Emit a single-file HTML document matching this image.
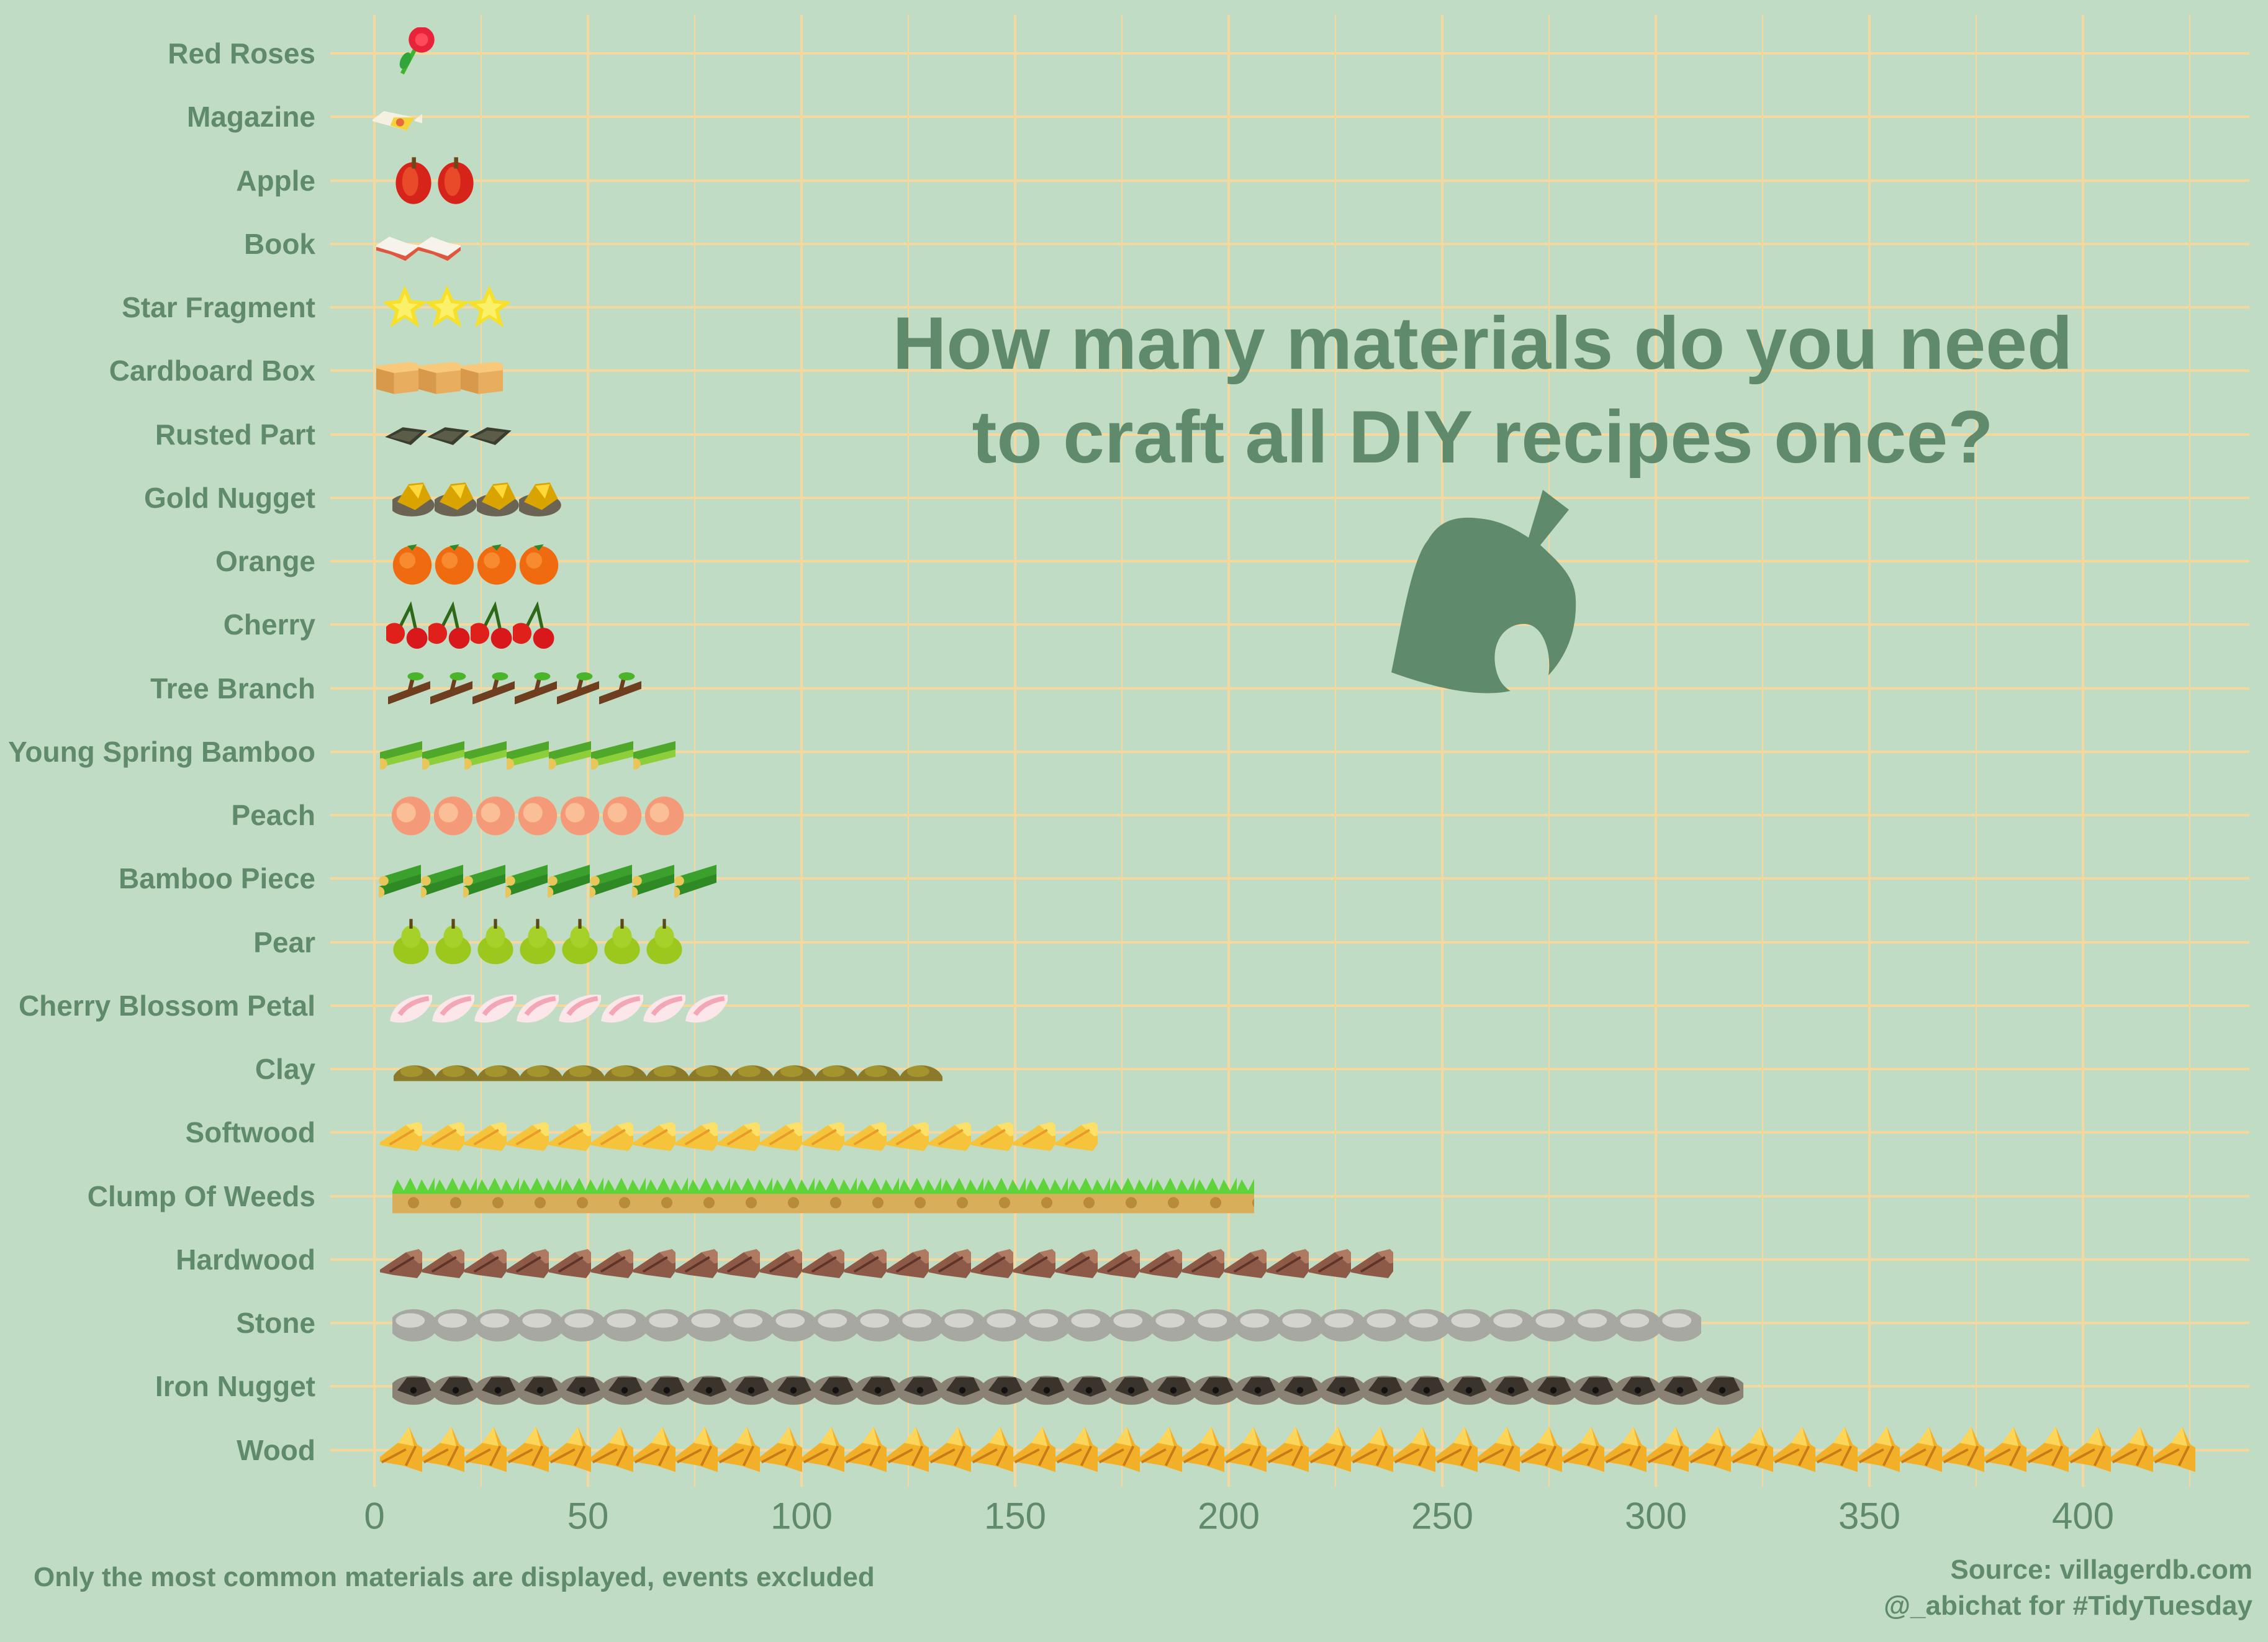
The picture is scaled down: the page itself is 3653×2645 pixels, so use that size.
<!DOCTYPE html>
<html><head><meta charset="utf-8"><style>
html,body{margin:0;padding:0;background:#c1dcc4;}
svg{display:block}
text{font-family:"Liberation Sans",sans-serif;fill:#5f8a6b}
</style></head><body>
<svg width="3653" height="2645" viewBox="0 0 3653 2645" xmlns="http://www.w3.org/2000/svg">
<defs>
<pattern id="rose" width="68" height="84" patternUnits="userSpaceOnUse"><g transform="translate(34,42) scale(1.3) translate(-34,-35)"><path d="M40,22 L20,60" stroke="#3fb52c" stroke-width="5"/><ellipse cx="24" cy="44" rx="6" ry="11" fill="#2fa53a" transform="rotate(25 24 44)"/><circle cx="44" cy="18" r="16" fill="#e8243a"/><circle cx="44" cy="18" r="8" fill="#ff4a5a"/></g></pattern>
<pattern id="mag" width="68" height="84" patternUnits="userSpaceOnUse"><g transform="translate(34,42) scale(1.3) translate(-34,-35)"><polygon points="6,40 22,28 60,36 50,52" fill="#f4f1e0"/><polygon points="34,36 60,36 50,52 30,46" fill="#f5d33a"/><circle cx="42" cy="42" r="5" fill="#e86a3a"/></g></pattern>
<pattern id="apple" width="68" height="84" patternUnits="userSpaceOnUse"><g transform="translate(34,42) scale(1.3) translate(-34,-35)"><ellipse cx="34" cy="38" rx="22" ry="26" fill="#d6241a"/><ellipse cx="30" cy="36" rx="10" ry="18" fill="#e84a2a"/><rect x="32" y="6" width="5" height="14" fill="#6a4a1a"/></g></pattern>
<pattern id="book" width="68" height="84" patternUnits="userSpaceOnUse"><g transform="translate(34,42) scale(1.3) translate(-34,-35)"><polygon points="4,42 24,28 48,36 64,40 44,56 26,48" fill="#e0573f"/><polygon points="6,38 24,26 46,34 62,37 44,50 26,44" fill="#f7f3ea"/></g></pattern>
<pattern id="star" width="68" height="84" patternUnits="userSpaceOnUse"><g transform="translate(34,42) scale(1.3) translate(-34,-35)"><polygon points="34,8 42,26 62,28 46,40 52,60 34,48 16,60 22,40 6,28 26,26" fill="#f7e02a"/><polygon points="34,18 39,30 50,31 41,38 44,50 34,44 24,50 27,38 18,31 29,30" fill="#fbf06a"/></g></pattern>
<pattern id="box" width="68" height="84" patternUnits="userSpaceOnUse"><g transform="translate(34,42) scale(1.3) translate(-34,-35)"><polygon points="0,30 50,24 80,32 30,38" fill="#f8c97a"/><polygon points="0,30 30,38 30,64 0,56" fill="#d89a4a"/><polygon points="30,38 80,32 80,58 30,64" fill="#e8ad5e"/></g></pattern>
<pattern id="rust" width="68" height="84" patternUnits="userSpaceOnUse"><g transform="translate(34,42) scale(1.3) translate(-34,-35)"><polygon points="8,38 30,26 60,30 40,48" fill="#3b3d30"/><polygon points="14,38 30,30 52,32 38,44" fill="#5b5d48"/></g></pattern>
<pattern id="gold" width="68" height="84" patternUnits="userSpaceOnUse"><g transform="translate(34,42) scale(1.3) translate(-34,-35)"><ellipse cx="32" cy="44" rx="28" ry="14" fill="#6b6454"/><polygon points="14,40 28,18 46,16 56,36 36,50" fill="#d9a400"/><polygon points="28,20 46,18 40,36" fill="#ffd83a"/></g></pattern>
<pattern id="orange" width="68" height="84" patternUnits="userSpaceOnUse"><g transform="translate(34,42) scale(1.3) translate(-34,-35)"><circle cx="34" cy="40" r="24" fill="#f06a10"/><circle cx="28" cy="34" r="10" fill="#f88a30"/><path d="M28,16 L40,14 L34,22Z" fill="#2c8a2a"/></g></pattern>
<pattern id="cherry" width="68" height="84" patternUnits="userSpaceOnUse"><g transform="translate(34,42) scale(1.3) translate(-34,-35)"><path d="M22,44 L38,12 L46,48" stroke="#2c6a1a" stroke-width="4" fill="none"/><circle cx="18" cy="46" r="13" fill="#e0201a"/><circle cx="46" cy="52" r="13" fill="#d8181a"/></g></pattern>
<pattern id="branch" width="68" height="84" patternUnits="userSpaceOnUse"><g transform="translate(34,42) scale(1.3) translate(-34,-35)"><path d="M8,50 L62,30" stroke="#6e3e1e" stroke-width="9" stroke-linecap="round"/><path d="M34,40 L38,24" stroke="#6e3e1e" stroke-width="5"/><ellipse cx="42" cy="20" rx="10" ry="5" fill="#4ab52a"/></g></pattern>
<pattern id="ybamboo" width="68" height="84" patternUnits="userSpaceOnUse"><g transform="translate(34,42) scale(1.3) translate(-34,-35)"><path d="M4,48 L60,34" stroke="#8ccf3a" stroke-width="14" stroke-linecap="round"/><path d="M10,40 L64,26" stroke="#4fa82a" stroke-width="10" stroke-linecap="round"/><circle cx="10" cy="50" r="7" fill="#e8c65a"/></g></pattern>
<pattern id="peach" width="68" height="84" patternUnits="userSpaceOnUse"><g transform="translate(34,42) scale(1.3) translate(-34,-35)"><circle cx="34" cy="36" r="24" fill="#f59a78"/><circle cx="28" cy="32" r="12" fill="#fbbf98"/></g></pattern>
<pattern id="bamboo" width="68" height="84" patternUnits="userSpaceOnUse"><g transform="translate(34,42) scale(1.3) translate(-34,-35)"><path d="M6,52 L60,34" stroke="#2f8a26" stroke-width="12" stroke-linecap="round"/><path d="M14,38 L66,22" stroke="#3ca02c" stroke-width="11" stroke-linecap="round"/><circle cx="8" cy="52" r="7" fill="#e8c65a"/><circle cx="14" cy="38" r="6" fill="#e8c65a"/></g></pattern>
<pattern id="pear" width="68" height="84" patternUnits="userSpaceOnUse"><g transform="translate(34,42) scale(1.3) translate(-34,-35)"><ellipse cx="34" cy="44" rx="22" ry="18" fill="#9cc81e"/><ellipse cx="34" cy="28" rx="12" ry="14" fill="#a6d02a"/><rect x="32" y="6" width="4" height="12" fill="#5a4a1a"/></g></pattern>
<pattern id="petal" width="68" height="84" patternUnits="userSpaceOnUse"><g transform="translate(34,42) scale(1.3) translate(-34,-35)"><path d="M8,54 C10,30 40,18 62,22 C58,44 34,62 8,54Z" fill="#fbe6ea"/><path d="M20,46 C28,34 42,28 56,26" stroke="#f2a6b6" stroke-width="6" fill="none"/></g></pattern>
<pattern id="clay" width="68" height="84" patternUnits="userSpaceOnUse"><g transform="translate(34,42) scale(1.3) translate(-34,-35)"><path d="M6,50 C8,26 56,22 62,50Z" fill="#8a7a2a"/><ellipse cx="30" cy="38" rx="14" ry="7" fill="#a4942e"/></g></pattern>
<pattern id="soft" width="68" height="84" patternUnits="userSpaceOnUse"><g transform="translate(34,42) scale(1.3) translate(-34,-35)"><polygon points="4,50 40,26 56,22 70,36 54,58 24,54" fill="#f5c43a"/><polygon points="40,26 56,22 70,36 56,40" fill="#fbe06a"/><path d="M20,50 L50,32" stroke="#e89a2a" stroke-width="3"/></g></pattern>
<pattern id="weeds" width="68" height="84" patternUnits="userSpaceOnUse"><g transform="translate(34,42) scale(1.3) translate(-34,-35)"><rect x="-20" y="30" width="108" height="26" fill="#d8ae5a"/><circle cx="34" cy="43" r="7" fill="#b88a3a"/><path d="M-20,28 L-12,14 L-6,28 L0,12 L8,28 L14,14 L22,28 L30,12 L38,28 L44,14 L52,28 L60,12 L68,28 L76,14 L88,28 L88,32 L-20,32Z" fill="#5fd43a"/></g></pattern>
<pattern id="hard" width="68" height="84" patternUnits="userSpaceOnUse"><g transform="translate(34,42) scale(1.3) translate(-34,-35)"><polygon points="4,50 40,26 56,22 70,36 54,58 24,54" fill="#8e5a48"/><polygon points="40,26 56,22 70,36 56,40" fill="#b07a62"/><path d="M20,50 L50,32" stroke="#5e3428" stroke-width="3"/></g></pattern>
<pattern id="stone" width="68" height="84" patternUnits="userSpaceOnUse"><g transform="translate(34,42) scale(1.3) translate(-34,-35)"><ellipse cx="34" cy="38" rx="30" ry="20" fill="#a8a8a2"/><ellipse cx="30" cy="32" rx="18" ry="9" fill="#d4d4ce"/></g></pattern>
<pattern id="iron" width="68" height="84" patternUnits="userSpaceOnUse"><g transform="translate(34,42) scale(1.3) translate(-34,-35)"><ellipse cx="34" cy="40" rx="30" ry="18" fill="#8a8274"/><polygon points="14,40 26,24 48,24 56,40 36,48" fill="#3a342c"/><circle cx="34" cy="40" r="4" fill="#111"/></g></pattern>
<pattern id="wood" width="68" height="84" patternUnits="userSpaceOnUse"><g transform="translate(34,42) scale(1.3) translate(-34,-35)"><polygon points="2,48 30,26 44,6 54,28 70,38 60,62 36,54" fill="#f2b028"/><polygon points="30,26 44,6 50,30" fill="#fcd65a"/><path d="M10,50 L40,34 M40,54 L52,30" stroke="#c87a1a" stroke-width="3"/></g></pattern>
</defs>

<g stroke="#f6d89c" stroke-width="2">
<line x1="775" y1="24" x2="775" y2="2395"/><line x1="1119" y1="24" x2="1119" y2="2395"/><line x1="1463" y1="24" x2="1463" y2="2395"/><line x1="1807" y1="24" x2="1807" y2="2395"/><line x1="2151" y1="24" x2="2151" y2="2395"/><line x1="2495" y1="24" x2="2495" y2="2395"/><line x1="2839" y1="24" x2="2839" y2="2395"/><line x1="3183" y1="24" x2="3183" y2="2395"/><line x1="3527" y1="24" x2="3527" y2="2395"/>
</g>
<g stroke="#f6d89c" stroke-width="4">
<line x1="603" y1="24" x2="603" y2="2395"/><line x1="947" y1="24" x2="947" y2="2395"/><line x1="1291" y1="24" x2="1291" y2="2395"/><line x1="1635" y1="24" x2="1635" y2="2395"/><line x1="1979" y1="24" x2="1979" y2="2395"/><line x1="2323" y1="24" x2="2323" y2="2395"/><line x1="2667" y1="24" x2="2667" y2="2395"/><line x1="3011" y1="24" x2="3011" y2="2395"/><line x1="3355" y1="24" x2="3355" y2="2395"/>
</g>
<g stroke="#f6d89c" stroke-width="4">
<line x1="532" x2="3623" y1="86" y2="86"/><line x1="532" x2="3623" y1="188" y2="188"/><line x1="532" x2="3623" y1="291" y2="291"/><line x1="532" x2="3623" y1="393" y2="393"/><line x1="532" x2="3623" y1="495" y2="495"/><line x1="532" x2="3623" y1="597" y2="597"/><line x1="532" x2="3623" y1="700" y2="700"/><line x1="532" x2="3623" y1="802" y2="802"/><line x1="532" x2="3623" y1="904" y2="904"/><line x1="532" x2="3623" y1="1006" y2="1006"/><line x1="532" x2="3623" y1="1109" y2="1109"/><line x1="532" x2="3623" y1="1211" y2="1211"/><line x1="532" x2="3623" y1="1313" y2="1313"/><line x1="532" x2="3623" y1="1415" y2="1415"/><line x1="532" x2="3623" y1="1518" y2="1518"/><line x1="532" x2="3623" y1="1620" y2="1620"/><line x1="532" x2="3623" y1="1722" y2="1722"/><line x1="532" x2="3623" y1="1824" y2="1824"/><line x1="532" x2="3623" y1="1927" y2="1927"/><line x1="532" x2="3623" y1="2029" y2="2029"/><line x1="532" x2="3623" y1="2131" y2="2131"/><line x1="532" x2="3623" y1="2233" y2="2233"/><line x1="532" x2="3623" y1="2336" y2="2336"/>
</g>

<rect width="68" height="84" fill="url(#rose)" transform="translate(632,44)"/>
<rect width="80" height="84" fill="url(#mag)" transform="translate(600,146)"/>
<rect width="136" height="84" fill="url(#apple)" transform="translate(632,249)"/>
<rect width="136" height="84" fill="url(#book)" transform="translate(606,351)"/>
<rect width="204" height="84" fill="url(#star)" transform="translate(618,453)"/>
<rect width="204" height="84" fill="url(#box)" transform="translate(606,555)"/>
<rect width="204" height="84" fill="url(#rust)" transform="translate(620,658)"/>
<rect width="272" height="84" fill="url(#gold)" transform="translate(632,760)"/>
<rect width="272" height="84" fill="url(#orange)" transform="translate(630,862)"/>
<rect width="272" height="84" fill="url(#cherry)" transform="translate(622,964)"/>
<rect width="408" height="84" fill="url(#branch)" transform="translate(625,1067)"/>
<rect width="476" height="84" fill="url(#ybamboo)" transform="translate(612,1169)"/>
<rect width="476" height="84" fill="url(#peach)" transform="translate(628,1271)"/>
<rect width="544" height="84" fill="url(#bamboo)" transform="translate(610,1373)"/>
<rect width="476" height="84" fill="url(#pear)" transform="translate(628,1476)"/>
<rect width="544" height="84" fill="url(#petal)" transform="translate(628,1578)"/>
<rect width="884" height="84" fill="url(#clay)" transform="translate(634,1680)"/>
<rect width="1156" height="84" fill="url(#soft)" transform="translate(612,1782)"/>
<rect width="1388" height="84" fill="url(#weeds)" transform="translate(632,1885)"/>
<rect width="1632" height="84" fill="url(#hard)" transform="translate(612,1987)"/>
<rect width="2108" height="84" fill="url(#stone)" transform="translate(632,2089)"/>
<rect width="2176" height="84" fill="url(#iron)" transform="translate(632,2191)"/>
<rect width="2924" height="84" fill="url(#wood)" transform="translate(612,2294)"/>

<g font-size="46" font-weight="bold" text-anchor="end" dominant-baseline="central">
<text x="508" y="86">Red Roses</text><text x="508" y="188">Magazine</text><text x="508" y="291">Apple</text><text x="508" y="393">Book</text><text x="508" y="495">Star Fragment</text><text x="508" y="597">Cardboard Box</text><text x="508" y="700">Rusted Part</text><text x="508" y="802">Gold Nugget</text><text x="508" y="904">Orange</text><text x="508" y="1006">Cherry</text><text x="508" y="1109">Tree Branch</text><text x="508" y="1211">Young Spring Bamboo</text><text x="508" y="1313">Peach</text><text x="508" y="1415">Bamboo Piece</text><text x="508" y="1518">Pear</text><text x="508" y="1620">Cherry Blossom Petal</text><text x="508" y="1722">Clay</text><text x="508" y="1824">Softwood</text><text x="508" y="1927">Clump Of Weeds</text><text x="508" y="2029">Hardwood</text><text x="508" y="2131">Stone</text><text x="508" y="2233">Iron Nugget</text><text x="508" y="2336">Wood</text>
</g>
<g font-size="60" text-anchor="middle" dominant-baseline="central">
<text x="603" y="2442">0</text><text x="947" y="2442">50</text><text x="1291" y="2442">100</text><text x="1635" y="2442">150</text><text x="1979" y="2442">200</text><text x="2323" y="2442">250</text><text x="2667" y="2442">300</text><text x="3011" y="2442">350</text><text x="3355" y="2442">400</text>
</g>

<g font-size="120" font-weight="bold" text-anchor="middle">
<text x="2388" y="594">How many materials do you need</text>
<text x="2388" y="745">to craft all DIY recipes once?</text>
</g>
<path d="M2241,1083 C2260,990 2275,900 2300,870 C2320,835 2350,830 2390,836 C2420,840 2445,855 2462,866 L2485,789 L2527,821 L2481,878 C2510,905 2538,930 2538,967 C2540,1020 2520,1060 2494,1088 C2500,1050 2485,1005 2455,1005 C2420,1005 2400,1040 2410,1080 C2415,1100 2425,1108 2433,1113 C2390,1122 2330,1115 2241,1083 Z" fill="#5f8a6b"/>

<text x="54" y="2555" font-size="44" font-weight="bold">Only the most common materials are displayed, events excluded</text>
<text x="3628" y="2543" font-size="44" font-weight="bold" text-anchor="end">Source: villagerdb.com</text>
<text x="3628" y="2601" font-size="44" font-weight="bold" text-anchor="end">@_abichat for #TidyTuesday</text>
</svg>
</body></html>
